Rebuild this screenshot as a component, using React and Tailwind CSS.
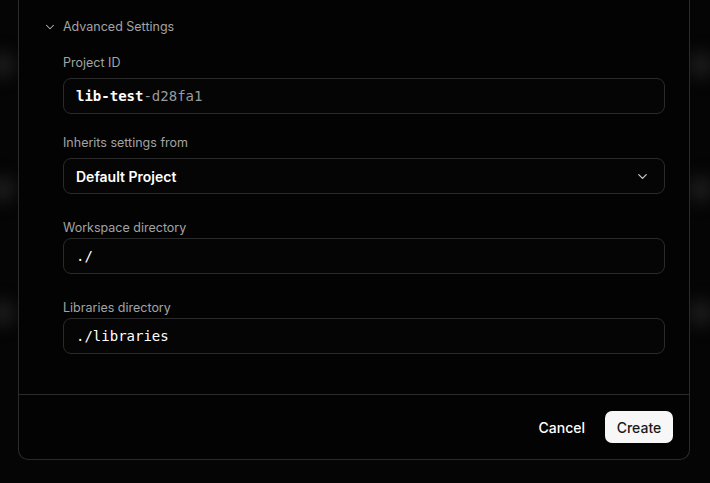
import React from "react";

const sans = { fontFamily: "Inter, 'Noto Sans', sans-serif" };

function Blob({ className }) {
  return <div className={"absolute w-[26px] h-[26px] rounded-full bg-[#1c1c1c] blur-[8px] " + className} />;
}

function Chevron({ className, strokeWidth = 2 }) {
  return (
    <svg className={className} viewBox="0 0 24 24" fill="none" stroke="currentColor" strokeWidth={strokeWidth} strokeLinecap="round" strokeLinejoin="round">
      <path d="m6 9 6 6 6-6" />
    </svg>
  );
}

export default function App() {
  return (
    <div className="relative h-[483px] w-[710px] overflow-hidden bg-[#050505] text-white" style={sans}>
      <Blob className="left-[-10px] top-[52px]" />
      <Blob className="left-[-10px] top-[176px]" />
      <Blob className="left-[-10px] top-[300px]" />
      <Blob className="left-[688px] top-[52px]" />
      <Blob className="left-[688px] top-[176px]" />
      <Blob className="left-[688px] top-[300px]" />
      <div className="relative ml-[18px] w-[672px] h-[460px] border-x border-b border-[#2b2b2b] rounded-b-[10px] bg-[#030303] flex flex-col">
        <div className="flex-1 pl-[44px] pr-[24px] pt-[17px]">
          <div className="relative flex items-center h-[20px] text-[12.5px] text-[#a3a3a3]">
            <Chevron className="absolute left-[-20px] top-[3px] w-[14px] h-[14px] text-[#b5b5b5]" strokeWidth={1.8} />
            <span>Advanced Settings</span>
          </div>

          <div className="mt-[17px] h-[18px] leading-[18px] text-[12.5px] text-[#a3a3a3]">Project ID</div>
          <div className="mt-[6px] h-[36px] rounded-[8px] border border-[#2a2a2a] bg-[#050505] flex items-center px-[12px] text-[14px]" style={{ fontFamily: "'DejaVu Sans Mono', monospace" }}>
            <span className="font-bold text-white">lib-test</span>
            <span className="text-[#9a9a9a]">-d28fa1</span>
          </div>

          <div className="mt-[20px] h-[18px] leading-[18px] text-[12.5px] text-[#a3a3a3]">Inherits settings from</div>
          <div className="mt-[6px] h-[36px] rounded-[8px] border border-[#2a2a2a] bg-[#050505] flex items-center justify-between pl-[12px] pr-[14px] text-[14px] font-semibold text-white">
            <span>Default Project</span>
            <Chevron className="w-[15px] h-[15px] text-[#c8c8c8]" />
          </div>

          <div className="mt-[25px] h-[18px] leading-[18px] text-[12.5px] text-[#a3a3a3]">Workspace directory</div>
          <div className="mt-[1px] h-[36px] rounded-[8px] border border-[#2a2a2a] bg-[#050505] flex items-center px-[12px] text-[14px] text-white" style={{ fontFamily: "'DejaVu Sans Mono', monospace" }}>
            ./
          </div>

          <div className="mt-[25px] h-[18px] leading-[18px] text-[12.5px] text-[#a3a3a3]">Libraries directory</div>
          <div className="mt-[1px] h-[36px] rounded-[8px] border border-[#2a2a2a] bg-[#050505] flex items-center px-[12px] text-[14px] text-white" style={{ fontFamily: "'DejaVu Sans Mono', monospace" }}>
            ./libraries
          </div>
        </div>
        <div className="h-[65px] border-t border-[#2b2b2b] flex items-center justify-end gap-[8px] pr-[16px]">
          <button className="h-[32px] px-[12px] text-[14px] font-medium text-white">Cancel</button>
          <button className="h-[32px] w-[68px] rounded-[7px] bg-[#f7f7f7] text-[14px] font-medium text-[#1a1a1a]">Create</button>
        </div>
      </div>
    </div>
  );
}
